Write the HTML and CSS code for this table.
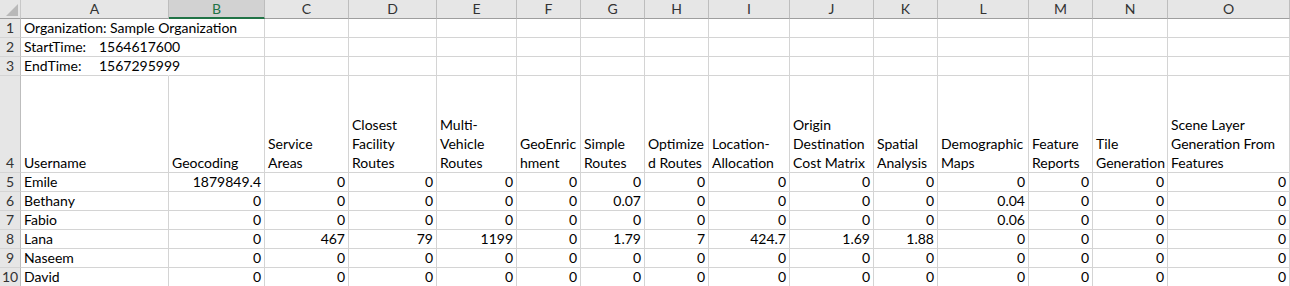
FILE: index.html
```html
<!DOCTYPE html>
<html>
<head>
<meta charset="utf-8">
<link rel="stylesheet" href="styles.css">
</head>
<body>
<div class="sheet">
  <div class="corner"><span class="tri"></span></div>
  <div class="ch">A</div><div class="ch sel">B</div><div class="ch">C</div><div class="ch">D</div><div class="ch">E</div><div class="ch">F</div><div class="ch">G</div><div class="ch">H</div><div class="ch">I</div><div class="ch">J</div><div class="ch">K</div><div class="ch">L</div><div class="ch">M</div><div class="ch">N</div><div class="ch">O</div>

  <div class="rh">1</div><div class="c over">Organization: Sample Organization</div><div class="c"></div><div class="c"></div><div class="c"></div><div class="c"></div><div class="c"></div><div class="c"></div><div class="c"></div><div class="c"></div><div class="c"></div><div class="c"></div><div class="c"></div><div class="c"></div><div class="c"></div><div class="c"></div>

  <div class="rh">2</div><div class="c over"><span class="lbl">StartTime:</span><span class="val">1564617600</span></div><div class="c"></div><div class="c"></div><div class="c"></div><div class="c"></div><div class="c"></div><div class="c"></div><div class="c"></div><div class="c"></div><div class="c"></div><div class="c"></div><div class="c"></div><div class="c"></div><div class="c"></div><div class="c"></div>

  <div class="rh">3</div><div class="c over"><span class="lbl">EndTime:</span><span class="val">1567295999</span></div><div class="c"></div><div class="c"></div><div class="c"></div><div class="c"></div><div class="c"></div><div class="c"></div><div class="c"></div><div class="c"></div><div class="c"></div><div class="c"></div><div class="c"></div><div class="c"></div><div class="c"></div><div class="c"></div>

  <div class="rh">4</div>
  <div class="c hd">Username</div>
  <div class="c hd">Geocoding</div>
  <div class="c hd">Service<br>Areas</div>
  <div class="c hd">Closest<br>Facility<br>Routes</div>
  <div class="c hd">Multi-<br>Vehicle<br>Routes</div>
  <div class="c hd">GeoEnric<br>hment</div>
  <div class="c hd">Simple<br>Routes</div>
  <div class="c hd">Optimize<br>d Routes</div>
  <div class="c hd">Location-<br>Allocation</div>
  <div class="c hd">Origin<br>Destination<br>Cost Matrix</div>
  <div class="c hd">Spatial<br>Analysis</div>
  <div class="c hd">Demographic<br>Maps</div>
  <div class="c hd">Feature<br>Reports</div>
  <div class="c hd">Tile<br>Generation</div>
  <div class="c hd">Scene Layer<br>Generation From<br>Features</div>

  <div class="rh">5</div><div class="c">Emile</div><div class="c n">1879849.4</div><div class="c n">0</div><div class="c n">0</div><div class="c n">0</div><div class="c n">0</div><div class="c n">0</div><div class="c n">0</div><div class="c n">0</div><div class="c n">0</div><div class="c n">0</div><div class="c n">0</div><div class="c n">0</div><div class="c n">0</div><div class="c n">0</div>

  <div class="rh">6</div><div class="c">Bethany</div><div class="c n">0</div><div class="c n">0</div><div class="c n">0</div><div class="c n">0</div><div class="c n">0</div><div class="c n">0.07</div><div class="c n">0</div><div class="c n">0</div><div class="c n">0</div><div class="c n">0</div><div class="c n">0.04</div><div class="c n">0</div><div class="c n">0</div><div class="c n">0</div>

  <div class="rh">7</div><div class="c">Fabio</div><div class="c n">0</div><div class="c n">0</div><div class="c n">0</div><div class="c n">0</div><div class="c n">0</div><div class="c n">0</div><div class="c n">0</div><div class="c n">0</div><div class="c n">0</div><div class="c n">0</div><div class="c n">0.06</div><div class="c n">0</div><div class="c n">0</div><div class="c n">0</div>

  <div class="rh">8</div><div class="c">Lana</div><div class="c n">0</div><div class="c n">467</div><div class="c n">79</div><div class="c n">1199</div><div class="c n">0</div><div class="c n">1.79</div><div class="c n">7</div><div class="c n">424.7</div><div class="c n">1.69</div><div class="c n">1.88</div><div class="c n">0</div><div class="c n">0</div><div class="c n">0</div><div class="c n">0</div>

  <div class="rh">9</div><div class="c">Naseem</div><div class="c n">0</div><div class="c n">0</div><div class="c n">0</div><div class="c n">0</div><div class="c n">0</div><div class="c n">0</div><div class="c n">0</div><div class="c n">0</div><div class="c n">0</div><div class="c n">0</div><div class="c n">0</div><div class="c n">0</div><div class="c n">0</div><div class="c n">0</div>

  <div class="rh">10</div><div class="c">David</div><div class="c n">0</div><div class="c n">0</div><div class="c n">0</div><div class="c n">0</div><div class="c n">0</div><div class="c n">0</div><div class="c n">0</div><div class="c n">0</div><div class="c n">0</div><div class="c n">0</div><div class="c n">0</div><div class="c n">0</div><div class="c n">0</div><div class="c n">0</div>
</div>
</body>
</html>
```
FILE: styles.css
```css
html, body {
  margin: 0;
  padding: 0;
  background: #ffffff;
  overflow: hidden;
}
.sheet {
  display: grid;
  grid-template-columns: 21px 148px 96px 84px 88px 80px 64px 64px 64px 81px 84px 64px 91px 64px 75px 122px;
  grid-template-rows: 19px 19px 19px 19px 97px 19px 19px 19px 19px 19px 19px;
  font-family: Lato, "Open Sans", sans-serif;
  font-size: 14px;
  color: #000;
  width: 1290px;
}
.corner {
  background: #e6e6e6;
  border-right: 1px solid #c8c8c8;
  border-bottom: 1px solid #9e9e9e;
  position: relative;
}
.tri {
  position: absolute;
  right: 2px;
  bottom: 2px;
  width: 0;
  height: 0;
  border-left: 12px solid transparent;
  border-bottom: 12px solid #b9b9b9;
}
.ch {
  background: #e6e6e6;
  border-right: 1px solid #bdbdbd;
  border-bottom: 1px solid #9e9e9e;
  display: flex;
  align-items: center;
  justify-content: center;
  color: #333;
  font-size: 14px;
  line-height: 18px;
}
.ch.sel {
  background: #d2d2d2;
  color: #217346;
  border-bottom: 2px solid #217346;
}
.rh {
  background: #e6e6e6;
  border-right: 1px solid #bdbdbd;
  border-bottom: 1px solid #d4d4d4;
  display: flex;
  align-items: flex-end;
  justify-content: center;
  color: #333;
  line-height: 18px;
}
.c {
  border-right: 1px solid #d4d4d4;
  border-bottom: 1px solid #d4d4d4;
  display: flex;
  align-items: flex-end;
  padding: 0 3px;
  line-height: 19px;
  white-space: nowrap;
  min-width: 0;
}
.c.over {
  overflow: visible;
  position: relative;
  z-index: 1;
  border-right-color: transparent;
}
.lbl {
  flex: 0 0 75px;
}
.val {
  flex: 0 0 auto;
}
.c.n {
  justify-content: flex-end;
}
.c.hd {
  flex-direction: column;
  justify-content: flex-end;
  align-items: flex-start;
}
```
